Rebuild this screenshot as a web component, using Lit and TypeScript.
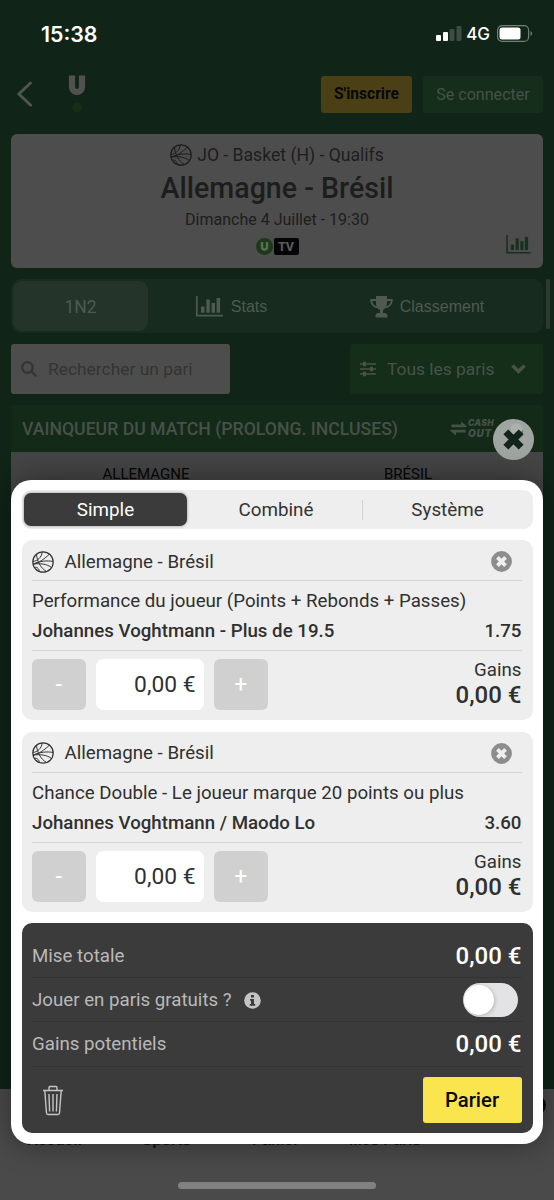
import { LitElement, html, css, svg } from "lit";
import { customElement, property } from "lit/decorators.js";

const ball = html`<svg class="ball" viewBox="0 0 22 22" fill="none" stroke="currentColor">
  <circle cx="11" cy="11" r="10.200" stroke-width="1.200"/>
  <path stroke-width="1" d="M1 10.500C5.500 10 9.500 6.500 10.300 .9M1 13C7 12 13 7.500 17.500 3M1.200 13.200C8 10 15 9.300 21 10.500M4.500 3.500C5 10 8.500 17 14.500 20.500M1.200 13.200C8 12 15 13 19.500 16.500M2.500 16.500C4.500 15.500 6.800 17 7.500 20.500"/>
</svg>`;

const chart = html`<svg class="chart" viewBox="0 0 27 21" fill="currentColor">
  <path d="M0 0h1.700v18.800H27v1.700H0z"/><path d="M5 10.500h3.500v6.200H5zM10.300 3.500h3.500v13.200h-3.500zM15.500 7h3.500v9.700h-3.500zM20.600 2h3.500v14.700h-3.500z"/>
</svg>`;

const cross = svg`<path d="M-4.500 -4.500L4.500 4.500M4.500 -4.500L-4.500 4.500"/>`;

@customElement("bet-card")
export class BetCard extends LitElement {
  @property() market = "";
  @property() pick = "";
  @property() odds = "";

  static styles = css`
    :host { display: block; box-sizing: border-box; height: 180.300px; padding: 0 11px 0 10px; background: #eee; border-radius: 10px; color: #303030; font-size: 18.700px; }
    .head { display: flex; align-items: center; height: 41px; box-sizing: border-box; padding-top: 3px; border-bottom: 1px solid #d4d4d4; }
    .ball { width: 22px; height: 22px; margin-right: 10.500px; color: #333; }
    .name { flex: 1; }
    .remove { width: 21px; height: 21px; margin-right: 10px; }
    .desc { height: 70px; box-sizing: border-box; border-bottom: 1px solid #d4d4d4; padding-top: 5px; line-height: 30px; white-space: nowrap; }
    .pick { display: flex; justify-content: space-between; font-weight: 500; }
    .stake { display: flex; align-items: flex-start; padding-top: 8px; }
    .step { width: 53.500px; height: 51px; border-radius: 6px; background: #d0d0d0; color: #fff; display: grid; place-items: center; font-size: 23px; }
    .amount { width: 107.500px; height: 51px; margin: 0 10.500px; padding-right: 8px; box-sizing: border-box; border-radius: 7px; background: #fff; font-size: 22.800px; line-height: 52px; text-align: right; }
    .gains { flex: 1; text-align: right; line-height: 25px; margin-top: -1px; }
    .sum { font-size: 24px; font-weight: 500; }
  `;

  render() {
    return html`
      <div class="head">${ball}<span class="name">Allemagne - Brésil</span>
        <svg class="remove" viewBox="-10.500 -10.500 21 21"><circle r="10.400" fill="#8d8d8d"/><g stroke="#eee" stroke-width="4.300" transform="scale(.9)">${cross}</g></svg>
      </div>
      <div class="desc">
        <div>${this.market}</div>
        <div class="pick"><span>${this.pick}</span><span>${this.odds}</span></div>
      </div>
      <div class="stake">
        <div class="step">-</div><div class="amount">0,00 €</div><div class="step">+</div>
        <div class="gains"><div>Gains</div><div class="sum">0,00 €</div></div>
      </div>`;
  }
}

@customElement("app-root")
export class AppRoot extends LitElement {
  static styles = css`
    :host { display: block; position: relative; width: 554px; height: 1200px; overflow: hidden; background: #102418; font-family: Roboto, "Liberation Sans", sans-serif; }
    .page { display: flex; flex-direction: column; height: 1200px; white-space: nowrap; }
    .status { display: flex; height: 67px; box-sizing: border-box; padding: 0 21px 0 41px; align-items: center; color: #fff; font-family: Inter, sans-serif; }
    .time { flex: 1; font-size: 21.300px; font-weight: 600; }
    .net { font-size: 17px; font-weight: 500; margin: 0 7px 0 4px; }
    .signal { width: 26px; height: 17px; }
    .battery { width: 36px; height: 17px; }
    .bar { display: flex; align-items: center; height: 67px; box-sizing: border-box; padding: 0 11px 13px 16px; }
    .back { width: 18px; height: 27px; }
    .logo { width: 18px; height: 40px; margin-left: 34px; margin-right: auto; }
    .btn { height: 37px; border-radius: 3px; display: grid; place-items: center; }
    .signup { width: 91px; background: #4b4015; color: #080804; font-size: 15.600px; font-weight: 700; margin-right: 11px; }
    .login { width: 120px; background: #142e1b; color: #465248; font-size: 16.100px; }
    .match { position: relative; height: 134px; margin: 0 11px; box-sizing: border-box; border-radius: 6px; background: #4d4d4d; color: #1d1d1d; display: flex; flex-direction: column; align-items: center; }
    .comp { display: flex; align-items: center; height: 24px; margin-top: 9px; font-size: 17.600px; }
    .ball { width: 22px; height: 22px; margin-right: 5px; }
    .teams { font-size: 28.600px; font-weight: 500; line-height: 36px; margin-top: 3px; }
    .date { font-size: 16px; line-height: 20px; margin-top: 4px; }
    .tv { display: flex; align-items: center; margin-top: 8px; }
    .u { width: 17px; height: 17px; margin-right: 1px; }
    .tvtag { width: 25px; height: 17px; border-radius: 2px; background: #050505; color: #5a5a5a; font-size: 12.500px; font-weight: 800; line-height: 17px; text-align: center; }
    .matchchart { position: absolute; right: 12px; top: 101px; color: #18301f; }
    .matchchart .chart { width: 25px; height: 19px; display: block; }
    .nav { display: flex; height: 54px; margin: 11px 11px 0; border-radius: 10px; background: #172c1e; color: #4e5a51; font-family: "Liberation Sans", sans-serif; font-size: 16px; }
    .tab { display: flex; align-items: center; justify-content: center; box-sizing: border-box; padding-top: 1px; }
    .tab.on { width: 135px; height: 50px; margin: 2px 0 0 2px; border-radius: 9px; background: #24342a; font-family: Roboto; font-size: 17.500px; }
    .tab.stats { width: 167px; }
    .tab.ranks { flex: 1; padding-right: 4px; }
    .tab .chart { width: 27px; height: 21px; margin-right: 8px; }
    .cup { width: 23px; height: 22px; margin-right: 7px; }
    .filters { display: flex; justify-content: space-between; margin: 11px 11px 0; height: 50px; font-size: 17.400px; }
    .search { width: 219px; display: flex; align-items: center; background: #4d4d4d; color: #343434; border-radius: 3px; }
    .glass { width: 16px; height: 16px; margin: 0 11px 0 10px; }
    .select { width: 193px; display: flex; align-items: center; background: #142e19; color: #48534a; border-radius: 2px; }
    .sliders { width: 16px; height: 16px; margin: 0 11px 0 10px; }
    .down { width: 15px; height: 10px; margin-left: 17px; }
    .section { display: flex; align-items: center; height: 47px; margin: 11px 11px 0; padding: 0 11px; box-sizing: border-box; background: #142a19; color: #465148; font-size: 17.650px; font-weight: 500; border-radius: 2px 2px 0 0; }
    .swap { width: 17px; height: 17px; margin-left: auto; }
    .cash { width: 29px; margin: 0 35px 0 1px; font: italic 900 8.500px/9px Inter, sans-serif; letter-spacing: .3px; }
    .out { font-size: 10px; line-height: 11px; letter-spacing: .8px; }
    .outcomes { display: flex; flex: none; box-sizing: border-box; margin: 0 11px; padding-top: 13px; height: 80px; background: #454545; color: #050505; font-size: 15px; }
    .outcomes span { flex: 1; text-align: center; }
    .outcomes span:first-child { flex: 0 0 270px; }
    .outcomes span:last-child { padding-right: 8px; }
    .bottom { margin-top: auto; height: 111px; box-sizing: border-box; background: #4a4a4a; display: flex; flex-direction: column; align-items: center; justify-content: space-between; padding: 42px 0 11px; }
    .links { display: grid; grid-template-columns: 115px 110px 97px 1fr; align-self: stretch; padding-left: 27px; font: 700 15.400px/17px "Liberation Sans", sans-serif; color: #111; }
    .home { width: 198px; height: 7px; border-radius: 4px; background: #818181; }
    .badge { position: absolute; left: 526px; top: 1095px; width: 20px; height: 20px; border-radius: 50%; background: #080808; }
    .scroll { position: absolute; left: 546px; top: 279px; width: 4px; height: 50px; border-radius: 2px; background: #2b3b31; }
    .sheet { position: absolute; left: 11px; top: 480px; width: 532px; height: 663.500px; box-sizing: border-box; padding: 10px 10.500px 0 11px; border-radius: 20px; background: #fff; box-shadow: 0 0 30px rgba(0,0,0,.4); display: flex; flex-direction: column; gap: 11.200px; }
    .close { position: absolute; left: 493px; top: 419px; width: 41px; height: 41px; }
    .modes { flex: none; height: 39px; border-radius: 9px; background: #eee; display: grid; grid-template-columns: 168px 172px 170px; align-items: center; text-align: center; font-size: 18.800px; color: #333; }
    .mode.on { height: 33px; margin: 0 3px 0 2px; line-height: 34px; border-radius: 7px; background: #3b3b3b; color: #fff; box-shadow: 0 0 3px rgba(0,0,0,.4); }
    .mode.last { height: 20px; line-height: 20px; border-left: 1px solid #d2d2d2; }
    bet-card { flex: none; }
    .total { flex: none; height: 209.500px; box-sizing: border-box; padding: 10.500px 11px 0 10px; border-radius: 10px; background: #3b3b3b; color: #b9b9b9; font-size: 18.700px; }
    .row { display: flex; align-items: center; justify-content: space-between; height: 44.300px; box-sizing: border-box; padding-top: 1px; border-bottom: 1px solid #333; }
    .value { color: #fff; font-size: 24px; font-weight: 500; }
    .info { width: 17px; height: 17px; margin-left: 12px; margin-right: auto; }
    .toggle { width: 55px; height: 34px; box-sizing: border-box; padding: 2px 1px; margin-right: 4px; border-radius: 17px; background: #e3e3e5; }
    .knob { width: 30px; height: 30px; border-radius: 50%; background: #fff; box-shadow: 1px 1px 4px rgba(0,0,0,.2); }
    .actions { display: flex; align-items: center; justify-content: space-between; padding-top: 10.500px; }
    .trash { width: 22px; height: 31px; margin-left: 10px; }
    .parier { width: 99px; height: 46px; border-radius: 3px; background: #fbe54e; color: #0a0a0a; display: grid; place-items: center; font-size: 20.300px; font-weight: 500; }
  `;

  render() {
    return html`
      <div class="page">
        <div class="status">
          <span class="time">15:38</span>
          <svg class="signal" viewBox="0 0 26 17"><g fill="#fff"><rect x="0" y="10" width="5" height="6" rx="1"/><rect x="7" y="7" width="5" height="9" rx="1"/></g><g fill="#3d4d43"><rect x="13.500" y="4" width="5" height="12" rx="1"/><rect x="20.500" y="1" width="5" height="15" rx="1"/></g></svg>
          <span class="net">4G</span>
          <svg class="battery" viewBox="0 0 36 17"><rect x=".6" y=".6" width="31" height="15.800" rx="4.500" fill="none" stroke="#708076" stroke-width="1.200"/><rect x="2.500" y="2.500" width="21" height="12" rx="2.500" fill="#fff"/><path d="M33.500 6c2 .7 2 4.300 0 5z" fill="#708076"/></svg>
        </div>
        <div class="bar">
          <svg class="back" viewBox="0 0 18 27" fill="none" stroke="#505550" stroke-width="3" stroke-linecap="round" stroke-linejoin="round"><path d="M14.500 2L2.800 13L14.500 24"/></svg>
          <svg class="logo" viewBox="0 0 18 40"><path d="M4 1.500V13a4.800 4.800 0 0 0 10 0V1.500" fill="none" stroke="#505250" stroke-width="6.200"/><circle cx="9" cy="33.500" r="5" fill="#152f14"/></svg>
          <div class="btn signup">S'inscrire</div><div class="btn login">Se connecter</div>
        </div>
        <div class="match">
          <div class="comp">${ball}JO - Basket (H) - Qualifs</div>
          <div class="teams">Allemagne - Brésil</div>
          <div class="date">Dimanche 4 Juillet - 19:30</div>
          <div class="tv"><svg class="u" viewBox="0 0 17 17"><circle cx="8.500" cy="8.500" r="8.500" fill="#1d3a17"/><path d="M6 4v5a2.500 2.500 0 0 0 5 0V4" fill="none" stroke="#5f665e" stroke-width="2.500"/></svg><span class="tvtag">TV</span></div>
          <div class="matchchart">${chart}</div>
        </div>
        <div class="nav">
          <div class="tab on">1N2</div>
          <div class="tab stats">${chart}Stats</div>
          <div class="tab ranks"><svg class="cup" viewBox="0 0 23 22" fill="currentColor"><path d="M6 0h11v6c0 5-1.500 7-4 8v3h2c1.500 0 2.500 1.500 2.500 3v1.500h-12V20c0-1.500 1-3 2.500-3h2v-3C7.500 13 6 11 6 6z"/><path d="M6 4H1.200c0 4 2.500 6.500 6.300 7.500M17 4h4.800c0 4-2.500 6.500-6.300 7.500" fill="none" stroke="currentColor" stroke-width="1.800"/></svg>Classement</div>
        </div>
        <div class="filters">
          <div class="search"><svg class="glass" viewBox="0 0 16 16" fill="none" stroke="currentColor" stroke-width="2.200"><circle cx="6.500" cy="6.500" r="5.300"/><path d="M10.500 10.500L15.200 15.200"/></svg>Rechercher un pari</div>
          <div class="select"><svg class="sliders" viewBox="0 0 16 16" fill="none" stroke="currentColor" stroke-width="1.500"><path d="M0 3h16M0 8h16M0 13h16"/><path stroke-width="3" d="M4.500 .8v4.400M11.500 5.800v4.400M4.500 10.800v4.400"/></svg>Tous les paris<svg class="down" viewBox="0 0 15 10" fill="none" stroke="currentColor" stroke-width="3.500"><path d="M1.500 1.500L7.500 7.500L13.500 1.500"/></svg></div>
        </div>
        <div class="section">VAINQUEUR DU MATCH (PROLONG. INCLUSES)
          <svg class="swap" viewBox="0 0 17 17" fill="currentColor"><path d="M1.500 4.500H11V1.500L17 6.200 15.500 7.300H1.500zM15.500 12.500H6v3L0 10.800 1.500 9.700h14z"/></svg>
          <div class="cash"><div>CASH</div><div class="out">OUT</div></div>
        </div>
        <div class="outcomes"><span>ALLEMAGNE</span><span>BRÉSIL</span></div>
        <div class="bottom">
          <div class="links"><span>Accueil</span><span>Sports</span><span>Panier</span><span>Mes Paris</span></div>
          <div class="home"></div>
        </div>
      </div>
      <div class="scroll"></div>
      <div class="badge"></div>
      <svg class="close" viewBox="-20.500 -20.500 41 41"><circle r="20.500" fill="#9fa5a0"/><circle cx="3" cy="-10" r="6" fill="#adb0ad"/><path d="M3 -4L9.500 -9.500V-5L6 -2z" fill="#6b6f6c"/><g stroke="#13251a" stroke-width="4.100" transform="scale(1.700)">${cross}</g></svg>
      <div class="sheet">
        <div class="modes"><div class="mode on">Simple</div><div class="mode">Combiné</div><div class="mode last">Système</div></div>
        <bet-card market="Performance du joueur (Points + Rebonds + Passes)" pick="Johannes Voghtmann - Plus de 19.5" odds="1.75"></bet-card>
        <bet-card market="Chance Double - Le joueur marque 20 points ou plus" pick="Johannes Voghtmann / Maodo Lo" odds="3.60"></bet-card>
        <div class="total">
          <div class="row"><span>Mise totale</span><span class="value">0,00 €</span></div>
          <div class="row"><span>Jouer en paris gratuits ?</span>
            <svg class="info" viewBox="0 0 17 17"><circle cx="8.500" cy="8.500" r="8.300" fill="#c4c4c4"/><path d="M7 3h3v2.500H7zM6 7h4v5h1.200v1.700H5.800V12H7V8.700H6z" fill="#3b3b3b"/></svg>
            <div class="toggle"><div class="knob"></div></div></div>
          <div class="row"><span>Gains potentiels</span><span class="value">0,00 €</span></div>
          <div class="actions">
            <svg class="trash" viewBox="0 0 22 31" fill="none" stroke="#c6c6c6" stroke-width="1.400"><path d="M1 5.500h20M7 5V2.500Q7 1.500 8 1.500h6q1 0 1 1V5M2.800 5.500L4.500 28q.1 1.500 1.500 1.500h10q1.400 0 1.500-1.500L19.200 5.500M7 9l.6 17.500M11 9v17.500M15 9l-.6 17.500"/></svg>
            <div class="parier">Parier</div>
          </div>
        </div>
      </div>`;
  }
}
